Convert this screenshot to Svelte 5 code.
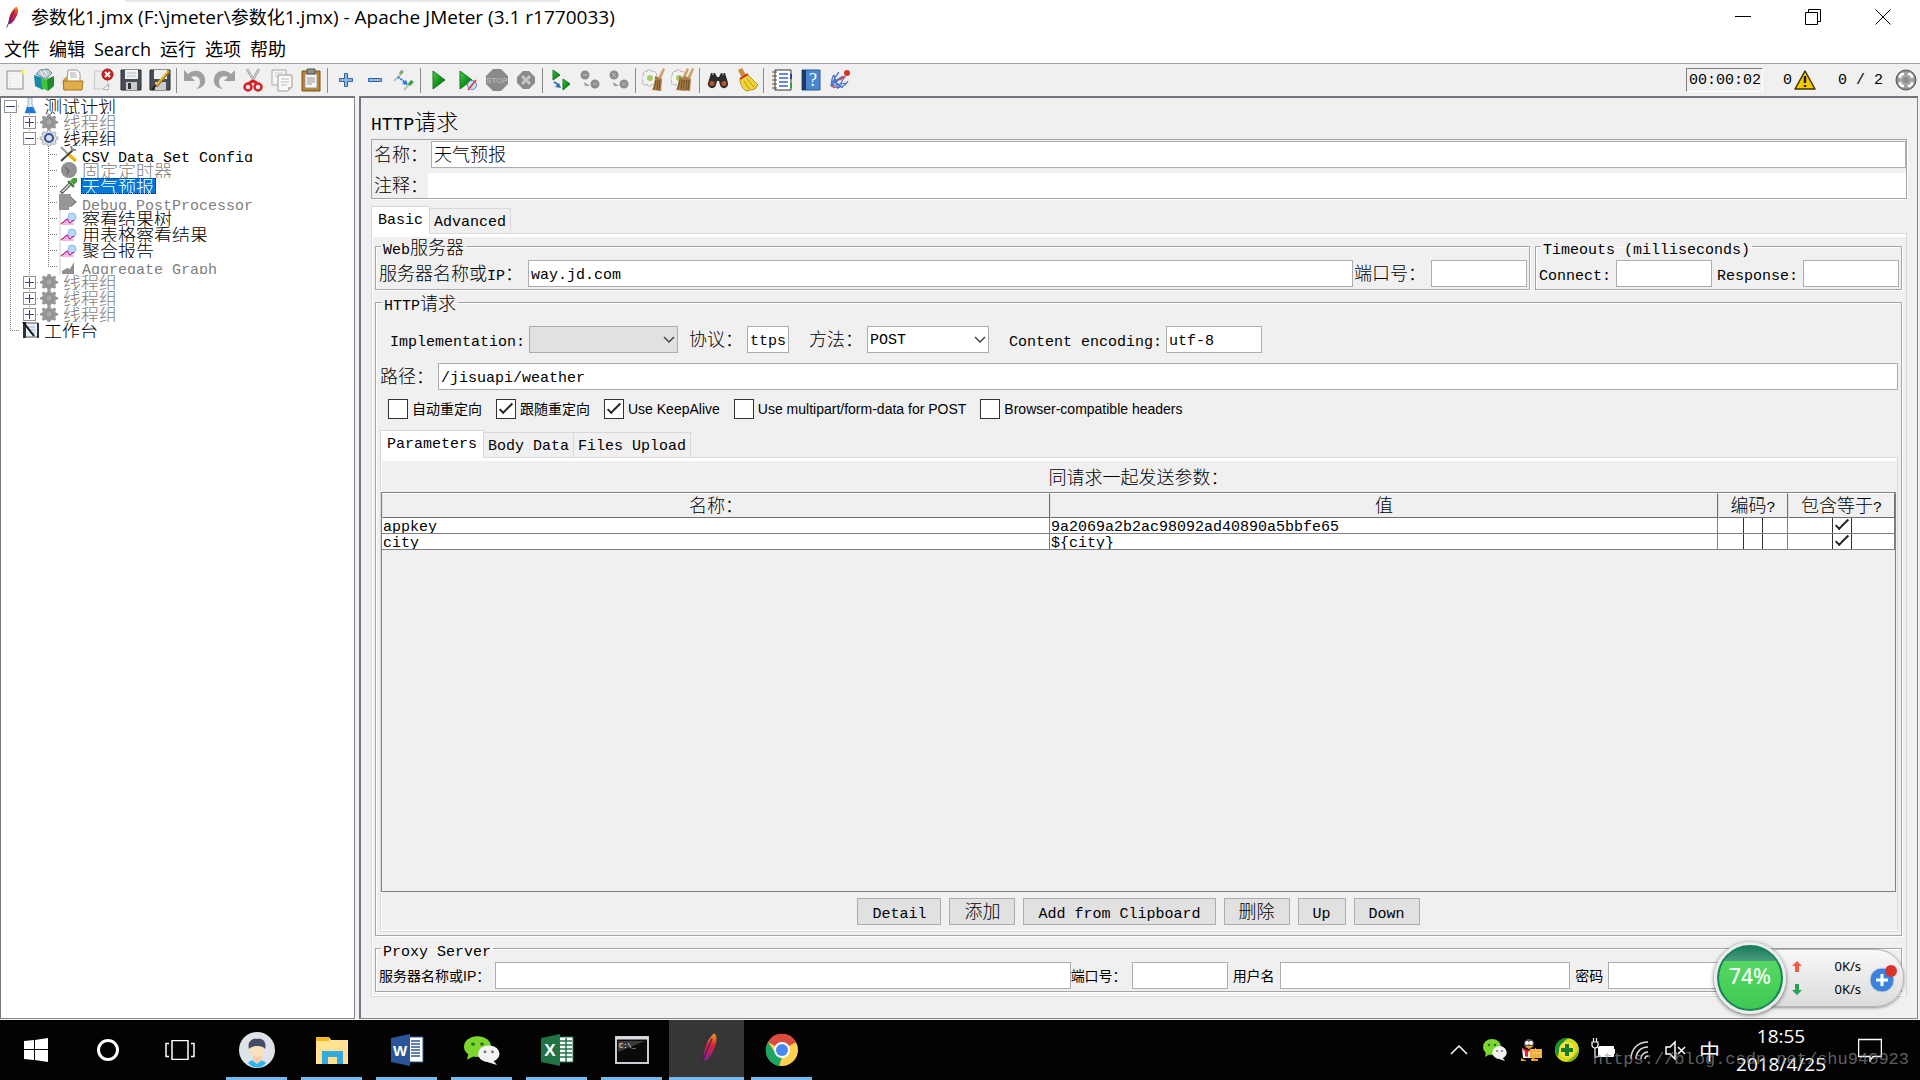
<script>
  const title = '参数化1.jmx (F:\\jmeter\\参数化1.jmx) - Apache JMeter (3.1 r1770033)'
  const menus = ['文件', '编辑', 'Search', '运行', '选项', '帮助']

  const toolbar = [
      ['new', 'templates', 'open', 'close', 'save', 'saveas'],
      ['undo', 'redo', 'cut', 'copy', 'paste'],
      ['plus', 'minus', 'toggle'],
      ['start', 'startnopause', 'stop', 'shutdown'],
      ['remotestart', 'remotestop', 'remoteshutdown'],
      ['clear', 'clearall'],
      ['search', 'searchreset'],
      ['functions', 'help', 'heap'],
  ]

  // guides: one entry per indent column, toggle: '+', '-' or none
  const tree = [
      { name: '测试计划', icon: 'plan', guides: ['first'], toggle: '-' },
      { name: '线程组', icon: 'gearoff', guides: ['line', 'tee'], toggle: '+', off: true },
      { name: '线程组', icon: 'gear', guides: ['line', 'tee'], toggle: '-' },
      { name: 'CSV Data Set Config', icon: 'config', guides: ['line', 'line', 'tee'] },
      { name: '固定定时器', icon: 'timer', guides: ['line', 'line', 'tee'], off: true },
      { name: '天气预报', icon: 'sampler', guides: ['line', 'line', 'tee'], selected: true },
      { name: 'Debug PostProcessor', icon: 'post', guides: ['line', 'line', 'tee'], off: true },
      { name: '察看结果树', icon: 'listener', guides: ['line', 'line', 'tee'] },
      { name: '用表格察看结果', icon: 'listener', guides: ['line', 'line', 'tee'] },
      { name: '聚合报告', icon: 'listener', guides: ['line', 'line', 'tee'] },
      { name: 'Aggregate Graph', icon: 'graphoff', guides: ['line', 'line', 'end'], off: true },
      { name: '线程组', icon: 'gearoff', guides: ['line', 'tee'], toggle: '+', off: true },
      { name: '线程组', icon: 'gearoff', guides: ['line', 'tee'], toggle: '+', off: true },
      { name: '线程组', icon: 'gearoff', guides: ['line', 'end'], toggle: '+', off: true },
      { name: '工作台', icon: 'workbench', guides: ['end'] },
  ]

  let options = $state([
      { label: '自动重定向', checked: false },
      { label: '跟随重定向', checked: true },
      { label: 'Use KeepAlive', checked: true },
      { label: 'Use multipart/form-data for POST', checked: false },
      { label: 'Browser-compatible headers', checked: false },
  ])

  let params = $state([
      { name: 'appkey', value: '9a2069a2b2ac98092ad40890a5bbfe65', encode: false, equals: true },
      { name: 'city', value: '${city}', encode: false, equals: true },
  ])

  const actions = ['Detail', '添加', 'Add from Clipboard', '删除', 'Up', 'Down']
  const apps = ['avatar', 'folder', 'word', 'wechat', 'excel', 'cmd', 'feather', 'chrome']

  let tab = $state('Basic')
  let bodyTab = $state('Parameters')
  let method = $state('POST')

  // split into latin and CJK runs, latin is set smaller so it takes half an em
  function runs(text) {
      return text.match(/[\x00-\x7f]+|[^\x00-\x7f]+/g) ?? []
  }

  const gear = 'M8.6 0h2.8l.5 2 1.7.7 2-1.1 1.6 1.7-1 1.9.7 1.5 2.1.6v2l-2.1.6-.7 1.4 1 1.9-1.6 1.6-2-1-1.7.7-.5 1.5H8.6l-.5-1.5-1.7-.7-2 1-1.6-1.6 1-1.9-.7-1.4L1 9.300V7.300l2.100-.6.7-1.500-1-1.900 1.600-1.700 2 1.100L8.100 2z'
  const broom = '<path d="M21 0l2 1-4 10-3-1z" fill="#c9a26a"/><path d="M13 8l7 3-1 12-9-1c2-4 3-8 3-14z" fill="#a97c48"/><path d="M14 12l-2 9M16 12l-1 10M18 12l-1 10" stroke="#6f4d27" stroke-width="1"/>'
  const miniGear = '<path d="M5 2h4l1 2 2-1 3 3-1 2 2 1v3l-2 1 1 2-3 2-2-1-1 2H6l-1-2-2 1-3-2 1-2-1-1V8l2-1-1-2 3-2 1 1z" fill="#f2f2f2" stroke="#bbb"/><circle cx="8" cy="10" r="3" fill="#a4cf62"/>'
  const feather = '<path d="M17 1c3 3 2 8-1 13-2 4-4 6-6 7l-2 0c0-8 3-16 9-20z" fill="url(#plume)"/><path d="M15 5C12 11 9 17 6 25" stroke="#4a1c55" stroke-width="1" fill="none"/>'
  const wechat = '<ellipse cx="9" cy="9" rx="9" ry="8" fill="#7bd62d"/><path d="M3 14l-1 5 5-3z" fill="#7bd62d"/><circle cx="6" cy="7" r="1.200" fill="#2f6a12"/><circle cx="12" cy="7" r="1.200" fill="#2f6a12"/><ellipse cx="16.500" cy="14.500" rx="7.200" ry="6.500" fill="#f2f2f2"/><path d="M19 19l3 4-6-2z" fill="#f2f2f2"/><circle cx="14" cy="13" r="1" fill="#777"/><circle cx="19" cy="13" r="1" fill="#777"/>'

  const icons = {
      new: '<path d="M4 3h16v18H4z" fill="#f4f4f4" stroke="#8c8c8c"/><path d="M7 6v13" stroke="#ccc" stroke-dasharray="1 2"/><path d="M20 0l1 3 3 1-3 1-1 3-1-3-3-1 3-1z" fill="#f7ea6a"/>',
      templates: '<path d="M4 6l4-4 8-1 4 4-6 6z" fill="#b9cdd2" stroke="#6b8a92"/><path d="M2 7l9 3v12l-8-4z" fill="#1689a8"/><path d="M9 10l7 2v11l-6-3z" fill="#3fc23c"/><path d="M15 11l7-3v10l-6 5z" fill="#1d8a2f"/><path d="M8 3l4 6M12 2l3 5" stroke="#fff"/>',
      open: '<path d="M7 2h9l3 3v9H6z" fill="#fff" stroke="#999"/><path d="M9 5h6M9 7h7M9 9h7" stroke="#aaa"/><path d="M2 12l3-3h1v4h14v9H2z" fill="#cf9632"/><path d="M2 13h20l-1 9H3z" fill="#e2ad4c" stroke="#a8741d"/>',
      close: '<path d="M5 3h12l1 18H4z" fill="#ececec" stroke="#c9c9c9"/><path d="M13 21l6-5-1 6z" fill="#fff" stroke="#aaa"/><circle cx="17.500" cy="6.500" r="5.500" fill="#d01f1f" stroke="#9c1010"/><path d="M15 4l5 5M20 4l-5 5" stroke="#fff" stroke-width="2"/>',
      save: '<path d="M2 2h20v20H2z" fill="#4a4e52" stroke="#2b2d30"/><path d="M6 2h13v9H6z" fill="#eef1f4"/><path d="M8 5h9M8 8h9" stroke="#b7c0c8"/><path d="M7 14h11v8H7z" fill="#c8ccd0"/><path d="M9 15h3v6H9z" fill="#333"/>',
      saveas: '<path d="M2 2h20v20H2z" fill="#4a4e52" stroke="#2b2d30"/><path d="M6 2h13v9H6z" fill="#eef1f4"/><path d="M7 14h11v8H7z" fill="#c8ccd0"/><path d="M21 3L8 18" stroke="#e8b13a" stroke-width="3"/><path d="M8 17l-4 5" stroke="#222" stroke-width="2"/><path d="M22 3L9 19" stroke="#7b5710"/>',
      undo: '<path d="M1 2v11h11l-4-4c6-2 9 1 9 5 0 3-1 5-4 7 7-1 10-5 9-10C21 3 12 0 5 6z" fill="#a0a0a0"/>',
      redo: '<path d="M23 2v11H12l4-4c-6-2-9 1-9 5 0 3 1 5 4 7-7-1-10-5-9-10C3 3 12 0 19 6z" fill="#a0a0a0"/>',
      cut: '<path d="M6 1l8 14M18 1l-8 14" stroke="#8f9498" stroke-width="2.500"/><path d="M6 1l8 14M18 1l-8 14" stroke="#dfe3e6"/><ellipse cx="7" cy="19" rx="3.500" ry="3.500" fill="none" stroke="#d81f26" stroke-width="2.500"/><ellipse cx="17" cy="19" rx="3.500" ry="3.500" fill="none" stroke="#d81f26" stroke-width="2.500"/><path d="M8 15l4-2 4 2" fill="none" stroke="#d81f26" stroke-width="3"/>',
      copy: '<path d="M2 2h14v15H2z" fill="#f4f4f4" stroke="#a8a8a8"/><path d="M5 5h8M5 8h8" stroke="#ccc"/><path d="M8 7h14v12l-4 4H8z" fill="#f8f8f8" stroke="#999"/><path d="M11 11h8M11 14h8M11 17h6" stroke="#bbb"/><path d="M18 23v-4h4z" fill="#bbb"/>',
      paste: '<path d="M3 3h18v20H3z" fill="#b9822d" stroke="#7b5313"/><path d="M6 6h12v14H6z" fill="#f6f6f6" stroke="#999"/><path d="M8 10h8M8 12h8M8 14h8M8 16h5" stroke="#999"/><path d="M8 1h8v5H8z" fill="#8b8f88" stroke="#555"/>',
      plus: '<path d="M10.500 5.500h3v5h5v3h-5v5h-3v-5h-5v-3h5z" fill="#8fb6e2" stroke="#2e64a8"/>',
      minus: '<path d="M5.500 10.500h13v3h-13z" fill="#8fb6e2" stroke="#2e64a8"/>',
      toggle: '<path d="M11 2l-3 5-6 6" stroke="#b5c8b5" stroke-width="2" fill="none"/><path d="M9 2l3 2-3 3-2-2z" fill="#81a878"/><path d="M6 9l8 6" stroke="#2876e0" stroke-width="2" stroke-dasharray="2 1"/><path d="M16 17l-6-1 4-4z" fill="#2876e0"/><path d="M20 13l-8 9" stroke="#b5c8b5" stroke-width="2"/><path d="M19 12l3 2-4 4-2-2z" fill="#3c9d3b"/>',
      start: '<path d="M6 3l12 9-12 9z" fill="url(#play)" stroke="#0b7a14"/>',
      startnopause: '<path d="M4 3l12 9-12 9z" fill="url(#play)" stroke="#0b7a14"/><circle cx="16" cy="17" r="4.500" fill="#cfe0f5" stroke="#5b86c6"/><path d="M12 22l8-10" stroke="#d33" stroke-width="1.500"/>',
      stop: '<path d="M8 1h8l7 7v8l-7 7H8l-7-7V8z" fill="#8a8a8a"/><text x="12" y="15" font-size="8" font-weight="bold" text-anchor="middle" font-family="Liberation Sans, sans-serif" fill="#b4b4b4">STOP</text>',
      shutdown: '<path d="M9 3h6l6 6v6l-6 6H9l-6-6V9z" fill="#8a8a8a"/><path d="M8 8l8 8M16 8l-8 8" stroke="#c4c4c4" stroke-width="3"/>',
      remotestart: '<path d="M4 2l7 5-7 5z" fill="url(#play)" stroke="#0b7a14"/><path d="M14 11l7 5-7 6z" fill="url(#play)" stroke="#0b7a14"/><path d="M5 14l5 3" stroke="#3b6fb5" stroke-width="2"/><path d="M12 20l-6-1 4-4z" fill="#3b6fb5"/>',
      remotestop: '<circle cx="7" cy="7" r="4.500" fill="#8d8d8d"/><circle cx="17" cy="16" r="4.500" fill="#8d8d8d"/><path d="M5 7h4M15 16h4" stroke="#a8a8a8" stroke-width="2"/><path d="M6 14l6 4H7z" fill="#999"/>',
      remoteshutdown: '<circle cx="7" cy="7" r="4.500" fill="#8d8d8d"/><circle cx="17" cy="16" r="4.500" fill="#8d8d8d"/><path d="M5 5l4 4M9 5L5 9M15 14l4 4M19 14l-4 4" stroke="#b4b4b4"/><path d="M6 14l6 4H7z" fill="#999"/>',
      clear: miniGear + broom,
      clearall: miniGear + '<g transform="translate(-5 0)">' + broom + '</g>' + broom,
      search: '<path d="M5 5h4l2 4h2l2-4h4l3 10a4 4 0 0 1-8 2l-1-4h-2l-1 4a4 4 0 0 1-8-2z" fill="#2c2c2c"/><circle cx="6" cy="15.500" r="2.500" fill="#b5562b"/><circle cx="18" cy="15.500" r="2.500" fill="#b5562b"/><path d="M6 6h2M16 6h2" stroke="#888" stroke-width="2"/>',
      searchreset: '<path d="M3 2l4-2 4 7-4 3z" fill="#c98e3a"/><path d="M5 11l7-5 11 11-3 4-9 2c-4-3-6-7-6-12z" fill="#f1d53b" stroke="#b7920f"/><path d="M5 11l8-5" stroke="#d22" stroke-width="2"/><path d="M9 13l5 8M12 11l7 8" stroke="#b7920f"/>',
      functions: '<path d="M5 2h16v20H5z" fill="#fff" stroke="#333"/><path d="M2 4h5M2 8h5M2 12h5M2 16h5M2 20h5" stroke="#555"/><path d="M9 6h9M9 10h9M9 14h9M9 18h9" stroke="#3566c9" stroke-width="1.500"/><path d="M21 6v5" stroke="#24a" stroke-width="2"/><path d="M21 15v5" stroke="#2a2" stroke-width="2"/>',
      help: '<path d="M3 2h18v20H3z" fill="#4a86d0" stroke="#2b5a9a"/><path d="M3 2h4v20H3z" fill="#1d3a66"/><text x="14" y="18" font-size="18" text-anchor="middle" font-family="Liberation Serif, serif" fill="#fff">?</text>',
      heap: '<path d="M20 13c-3 6-11 8-17 5 1-3 0-8 3-11M3 18l15-3M5 12l10 8M6 7l4 14M11 4c-5 6-6 10-8 14 6-5 9-8 15-9M16 10l-6 10M4 15l11-7" fill="none" stroke="#4b6fc4" stroke-width="1.200"/><path d="M12 12l5-4M7 20l-3-2" stroke="#d44" stroke-width="1.500"/><circle cx="19" cy="5" r="3" fill="#d9302c"/>',
  }

  const treeIcons = {
      plan: '<path d="M8 0h4v6l4 9H5l3-9z" fill="#dfe9f4" stroke="#9fb4c9"/><path d="M7 9h6l3 6H5z" fill="#1d7ad8"/>',
      gear: `<path d="${gear}" fill="#d9dde2" stroke="#aaa"/><circle cx="10" cy="8" r="4" fill="#cfe0f8" stroke="#34548f" stroke-width="2"/>`,
      gearoff: `<path d="${gear}" fill="#979797"/><circle cx="10" cy="8" r="3.500" fill="#a8a8a8" stroke="#858585"/>`,
      config: '<path d="M3 1l14 14" stroke="#9a9a9a" stroke-width="2"/><path d="M10 8l8 7" stroke="#f0b400" stroke-width="3"/><path d="M16 3L3 15" stroke="#444" stroke-width="2"/><path d="M13 0l1 4 4 0" fill="none" stroke="#888" stroke-width="2"/>',
      timer: '<circle cx="11" cy="8" r="8" fill="#929292"/><path d="M7 5l4 4-2 3" fill="none" stroke="#6e6e6e" stroke-width="1.500"/>',
      sampler: '<path d="M13 5L3 15" stroke="#555" stroke-width="3.500"/><path d="M13 5L4 14" stroke="#dce8dc" stroke-width="1.500"/><path d="M12 3l4 4 3-3V0h-4z" fill="#4b9c3e"/><path d="M10 3l6 6" stroke="#347a2a" stroke-width="2"/>',
      post: '<path d="M1 0h12v3l6 5-6 5H11v3H1z" fill="#979797"/><path d="M13 3l5 5-5 4" fill="none" stroke="#777"/>',
      listener: '<path d="M2 0v16" stroke="#ccc"/><path d="M4 14l5-5 3 4 4 0v2H3z" fill="#f6b8e8"/><circle cx="14" cy="7" r="4" fill="#b5dcfa" stroke="#8fb5e8"/><path d="M3 14l6-5 3 4 4-3" fill="none" stroke="#c0228c" stroke-width="1.200"/>',
      graphoff: '<path d="M2 0v16" stroke="#ccc"/><path d="M4 16v-3l5-3 3 1 4-7v12z" fill="#8f8f8f"/>',
      workbench: '<path d="M4 1h14v14H4z" fill="#eaf0f7" stroke="#555"/><path d="M3 0h3v16H3zM17 1h2v15h-2z" fill="#333"/><path d="M8 5h7M9 8h6M10 11h5" stroke="#9db8d6"/><path d="M3 0l11 14" stroke="#111" stroke-width="2"/>',
  }

  const appIcons = {
      avatar: '<circle cx="18" cy="18" r="18" fill="#dfe3e8"/><path d="M9 31c2-4 16-4 18 0-5 6-13 6-18 0z" fill="#2bb8f2"/><path d="M14 22h8v7l-4 3-4-3z" fill="#f6cfa8"/><circle cx="18" cy="18" r="7" fill="#fbe0c0"/><path d="M10 17c-2-7 3-11 8-10 6-1 10 3 8 10-2-3-6-3-8-3-3 0-6 1-8 3z" fill="#414e66"/>',
      folder: '<path d="M2 5h13l2 3h17v24H2z" fill="#ffe391"/><path d="M2 5h13v4H2z" fill="#f3b923"/><path d="M8 19h21v13h-6v-7h-9v7H8z" fill="#37a8e0"/>',
      word: '<path d="M20 5h14v25H20z" fill="#fff" stroke="#2a5699"/><path d="M22 9h9M22 12h9M22 15h9M22 18h9M22 21h9M22 24h9" stroke="#2a5699" stroke-width="1.500"/><path d="M2 6l19-4v32L2 30z" fill="#2a5699"/><text x="11" y="24" font-size="15" font-weight="bold" text-anchor="middle" font-family="Liberation Sans, sans-serif" fill="#fff">W</text>',
      wechat: '<g transform="translate(0 3) scale(1.500 1.300)">' + wechat + '</g>',
      excel: '<path d="M20 5h14v25H20z" fill="#fff" stroke="#217346"/><path d="M21 9h12M21 13h12M21 17h12M21 21h12M21 25h12M27 6v24" stroke="#217346" stroke-width="1.500"/><path d="M2 6l19-4v32L2 30z" fill="#217346"/><text x="11" y="24" font-size="17" font-weight="bold" text-anchor="middle" font-family="Liberation Sans, sans-serif" fill="#fff">X</text>',
      cmd: '<path d="M2 5h32v26H2z" fill="#0a0a0a" stroke="#c9ced4" stroke-width="2"/><path d="M2 6h32" stroke="#d9dde2" stroke-width="3"/><path d="M4 9h27L4 20z" fill="#3a3a3a"/><text x="5" y="16" font-size="7" font-family="Liberation Mono, monospace" fill="#fff">C:\\_</text>',
      feather: '<g transform="translate(5 0) scale(1.200 1.350)">' + feather + '</g>',
      chrome: '<circle cx="18" cy="18" r="16" fill="#fdd04e"/><path d="M18 18L4 10a16 16 0 0 1 28 0z" fill="#dd4b3e"/><path d="M18 2a16 16 0 0 1 14 9H18z" fill="#dd4b3e"/><path d="M4 10l8 12 6 3-3 9A16 16 0 0 1 4 10z" fill="#1da362"/><circle cx="18" cy="18" r="8" fill="#fff"/><circle cx="18" cy="18" r="6" fill="#4587f3"/>',
  }

  const trayIcons = {
      up: '<path d="M4 16l8-8 8 8" fill="none" stroke="#fff" stroke-width="1.500"/>',
      wechat,
      qq: '<ellipse cx="10" cy="6" rx="5" ry="5" fill="#555"/><ellipse cx="8" cy="5" rx="2" ry="2" fill="#fff"/><ellipse cx="12" cy="5" rx="2" ry="2" fill="#fff"/><path d="M6 8h8l-4 3z" fill="#f3a21b"/><path d="M3 10c4 3 10 3 14 0v10H4z" fill="#eee"/><path d="M2 9l6 3 7-1-6 3v5l-3-1v-4z" fill="#d9202a"/><path d="M2 20l6 3H2zM12 21h7v2h-7z" fill="#f3a21b"/><path d="M11 11h12v9h-7l-3 2v-2h-2z" fill="#efb03d"/><path d="M14 15h1M17 15h1M20 15h1" stroke="#fff"/>',
      safe: '<circle cx="12" cy="12" r="12" fill="#d3dc1c"/><path d="M0 12A12 12 0 0 1 14 0C8 3 4 8 3 19A12 12 0 0 1 0 12z" fill="#149332"/><path d="M22 18a12 12 0 0 0 2-8c-2 6-6 10-13 14 5 0 9-2 11-6z" fill="#7bb51c"/><circle cx="12" cy="12" r="8" fill="#f6e13a"/><path d="M10 6h4v4h4v4h-4v4h-4v-4H6v-4h4z" fill="#157a25"/>',
      battery: '<path d="M7 9h15v9H7z" fill="#fff"/><path d="M5 18.500h17.500v-10H8" fill="none" stroke="#fff"/><path d="M23.500 11v5" stroke="#fff"/><path d="M1 4h6v3a3 3 0 0 1-6 0zM2.500 0v4M5.500 0v4M4 10v9h3" fill="#000" stroke="#fff" stroke-width="1.200"/>',
      wifi: '<path d="M4 21C4 11 11 4 21 4M9 21c0-7 5-12 12-12M14 21c0-4 3-7 7-7M18 21c0-2 1-3 3-3" fill="none" stroke="#ddd" stroke-width="1.500"/>',
      mute: '<path d="M3 9h4l5-5v17l-5-5H3z" fill="none" stroke="#fff" stroke-width="1.500"/><path d="M15 9l7 7M22 9l-7 7" stroke="#fff" stroke-width="1.500"/>',
  }
</script>

{#snippet text(value)}<span class="mixed">{#each runs(value) as run}<span class={/[\x00-\x7f]/.test(run) ? 'latin' : 'cjk'}>{run}</span>{/each}</span>{/snippet}

{#snippet chevron()}
  <svg class="chevron" viewBox="0 0 12 8" width="12" height="8"><path d="M1 1l5 5 5-5" fill="none" stroke="#444" stroke-width="1.5" /></svg>
{/snippet}

<svg class="defs" width="0" height="0" aria-hidden="true">
  <defs>
    <linearGradient id="play" x1="0" y1="0" x2="1" y2="1">
      <stop offset="0" stop-color="#4fd04f" />
      <stop offset="0.5" stop-color="#14951c" />
      <stop offset="1" stop-color="#0a6a12" />
    </linearGradient>
    <linearGradient id="plume" x1="0" y1="0" x2="0" y2="1">
      <stop offset="0" stop-color="#f69923" />
      <stop offset="0.45" stop-color="#d8223a" />
      <stop offset="1" stop-color="#7c2a8c" />
    </linearGradient>
  </defs>
</svg>

<div class="screen">
  <header class="titlebar">
    <svg class="app-icon" viewBox="4 0 17 26" width="15" height="24">{@html feather}</svg>
    <h1>{@render text(title)}</h1>
    <div class="window-buttons">
      <button aria-label="Minimize"><svg viewBox="0 0 16 16" width="16" height="16"><path d="M0 7.5h16" stroke="#000" /></svg></button>
      <button aria-label="Restore"><svg viewBox="0 0 16 16" width="16" height="16"><path d="M.5 3.5h12v12H.5zM3.500 3.500v-3h12v12h-3" fill="none" stroke="#000" /></svg></button>
      <button aria-label="Close"><svg viewBox="0 0 16 16" width="16" height="16"><path d="M.5.5l15 15M15.500.5l-15 15" stroke="#000" /></svg></button>
    </div>
  </header>

  <nav class="menubar">
    {#each menus as menu}
      <button>{menu}</button>
    {/each}
  </nav>

  <div class="toolbar">
    {#each toolbar as group}
      <div class="group">
        {#each group as name}
          <button aria-label={name}><svg viewBox="0 0 24 24" width="24" height="24">{@html icons[name]}</svg></button>
        {/each}
      </div>
    {/each}
    <div class="status">
      <span class="timer">00:00:02</span>
      <span class="warnings">
        <span>0</span>
        <svg viewBox="0 0 22 20" width="22" height="20"><path d="M11 1l10 18H1z" fill="#f5c800" stroke="#3b3200" stroke-width="1.500" stroke-linejoin="round" /><path d="M11 6v7M11 15v2" stroke="#222" stroke-width="2.500" /></svg>
      </span>
      <span class="threads">0 / 2</span>
      <svg viewBox="0 0 22 22" width="22" height="22"><circle cx="11" cy="11" r="10" fill="#8d8d8d" stroke="#555" /><circle cx="11" cy="11" r="8" fill="#a5a5a5" /><path d="M5 9V7l2-2h2M13 5h2l2 2v2M17 13v2l-2 2h-2M9 17H7l-2-2v-2" fill="none" stroke="#fff" stroke-width="2.500" /><circle cx="11" cy="11" r="3" fill="#8d8d8d" /></svg>
    </div>
  </div>

  <main class="split">
    <aside class="tree">
      <ul>
        {#each tree as node}
          <li class:off={node.off}>
            {#each node.guides as guide, i}
              <span class="guide {guide}">
                {#if node.toggle && i === node.guides.length - 1}
                  <button class="toggle" aria-label="Toggle {node.name}">
                    <svg viewBox="0 0 11 11" width="11" height="11"><path d={node.toggle === '+' ? 'M1 5.5h9M5.5 1v9' : 'M1 5.5h9'} stroke="#27408b" /></svg>
                  </button>
                {/if}
              </span>
            {/each}
            <svg class="node-icon" viewBox="0 0 20 16" width="20" height="16">{@html treeIcons[node.icon]}</svg>
            <span class="node-name" class:selected={node.selected}>{@render text(node.name)}</span>
          </li>
        {/each}
      </ul>
    </aside>

    <section class="editor">
      <h2><span>HTTP</span>请求</h2>

      <div class="identity">
        <div class="identity-row">
          <label for="name">名称：</label>
          <input id="name" class="wide zh" value="天气预报" />
        </div>
        <div class="identity-row comment">
          <label for="comment">注释：</label>
          <input id="comment" class="wide" />
        </div>
      </div>

      <div class="tabs">
        {#each ['Basic', 'Advanced'] as name}
          <button class:active={tab === name} onclick={() => (tab = name)}>{name}</button>
        {/each}
      </div>
      <div class="tab-body outer">
        <div class="servers">
          <fieldset class="web">
            <legend>{@render text('Web服务器')}</legend>
            <label for="server">{@render text('服务器名称或IP：')}</label>
            <input id="server" class="wide" value="way.jd.com" />
            <label for="port">端口号：</label>
            <input id="port" class="short" />
          </fieldset>
          <fieldset class="timeouts">
            <legend>{@render text('Timeouts (milliseconds)')}</legend>
            <label for="connect">{@render text('Connect:')}</label>
            <input id="connect" class="short" />
            <label class="next" for="response">{@render text('Response:')}</label>
            <input id="response" class="short" />
          </fieldset>
        </div>

        <fieldset class="request">
          <legend>{@render text('HTTP请求')}</legend>
          <div class="line settings">
            <div class="pair">
              <label for="impl">{@render text('Implementation:')}</label>
              <span class="combo impl">
                <select id="impl"><option></option></select>
                {@render chevron()}
              </span>
            </div>
            <div class="pair protocol">
              <label for="protocol">协议：</label>
              <input id="protocol" class="tiny" value="ttps" />
            </div>
            <div class="pair">
              <label for="method">方法：</label>
              <span class="combo method">
                <select id="method" bind:value={method}>
                  <option>POST</option>
                  <option>GET</option>
                </select>
                {@render chevron()}
              </span>
            </div>
            <div class="pair">
              <label for="encoding">{@render text('Content encoding:')}</label>
              <input id="encoding" class="short" value="utf-8" />
            </div>
          </div>

          <div class="line path">
            <label for="path">路径：</label>
            <input id="path" class="wide" value="/jisuapi/weather" />
          </div>

          <div class="line checks">
            {#each options as option}
              <label><input type="checkbox" bind:checked={option.checked} />{option.label}</label>
            {/each}
          </div>

          <div class="tabs">
            {#each ['Parameters', 'Body Data', 'Files Upload'] as name}
              <button class:active={bodyTab === name} onclick={() => (bodyTab = name)}>{name}</button>
            {/each}
          </div>
          <div class="tab-body inner">
            <p class="caption">同请求一起发送参数：</p>
            <div class="grid-scroll">
              <table>
                <colgroup><col /><col /><col class="c-encode" /><col class="c-equals" /></colgroup>
                <thead>
                  <tr>
                    {#each ['名称：', '值', '编码?', '包含等于?'] as column}
                      <th>{@render text(column)}</th>
                    {/each}
                  </tr>
                </thead>
                <tbody>
                  {#each params as param}
                    <tr>
                      <td><div>{param.name}</div></td>
                      <td><div>{param.value}</div></td>
                      <td><div class="tick"><input type="checkbox" aria-label="编码" bind:checked={param.encode} /></div></td>
                      <td><div class="tick"><input type="checkbox" aria-label="包含等于" bind:checked={param.equals} /></div></td>
                    </tr>
                  {/each}
                </tbody>
              </table>
            </div>
            <div class="actions">
              {#each actions as action}
                <button>{@render text(action)}</button>
              {/each}
            </div>
          </div>
        </fieldset>

        <fieldset class="proxy">
          <legend>{@render text('Proxy Server')}</legend>
          <label for="proxy-server">服务器名称或IP：</label>
          <input id="proxy-server" class="server" />
          <label class="port" for="proxy-port">端口号：</label>
          <input id="proxy-port" class="short" />
          <label class="next" for="proxy-user">用户名</label>
          <input id="proxy-user" class="credential" />
          <label class="next" for="proxy-pass">密码</label>
          <input id="proxy-pass" class="credential" type="password" />
        </fieldset>
      </div>
    </section>
  </main>

  <footer class="taskbar">
    <button class="system" aria-label="Start">
      <svg viewBox="0 0 24 24" width="24" height="24"><path d="M0 3l10-1v9H0zM11 2l13-2v11H11zM0 12h10v10L0 21zM11 12h13v12l-13-2z" fill="#fff" /></svg>
    </button>
    <button class="system" aria-label="Search">
      <svg viewBox="0 0 24 24" width="24" height="24"><circle cx="12" cy="12" r="9.500" fill="none" stroke="#fff" stroke-width="3" /></svg>
    </button>
    <button class="system" aria-label="Task view">
      <svg viewBox="0 0 30 20" width="30" height="20"><path d="M7 .5h16v19H7zM4 3.500H1v13h3M26 3.500h3v13h-3" fill="none" stroke="#fff" stroke-width="1.500" /></svg>
    </button>
    <div class="apps">
      {#each apps as app}
        <button class="app" class:current={app === 'feather'} aria-label={app}>
          <svg viewBox="0 0 36 36" width="36" height="36">{@html appIcons[app]}</svg>
        </button>
      {/each}
    </div>

    <div class="tray">
      {#each Object.keys(trayIcons) as name}
        <svg viewBox="0 0 24 24" width="24" height="24">{@html trayIcons[name]}</svg>
      {/each}
      <span class="ime">中</span>
      <div class="clock"><span>18:55</span><span>2018/4/25</span></div>
      <svg class="notify" viewBox="0 0 24 24" width="24" height="24"><path d="M.5 1.500h23v17H15l-3 4v-4H.5z" fill="none" stroke="#fff" stroke-width="1.500" /></svg>
    </div>
    <span class="watermark">https://blog.csdn.net/shu940923</span>
  </footer>

  <div class="top-shade"></div>

  <div class="monitor">
    <div class="ball"><span>74%</span></div>
    <div class="rates">
      <div>
        <svg viewBox="0 0 10 12" width="10" height="12"><path d="M5 0l5 5H7v6H3V5H0z" fill="#ee5a42" /></svg>
        <span>0K/s</span>
      </div>
      <div>
        <svg viewBox="0 0 10 12" width="10" height="12"><path d="M5 11L0 6h3V0h4v6h3z" fill="#23a455" /></svg>
        <span>0K/s</span>
      </div>
    </div>
    <svg class="boost" viewBox="0 0 30 30" width="30" height="30"><circle cx="14" cy="17" r="12" fill="#3b82dc" stroke="#c6cfda" /><path d="M14 11v12M8 17h12" stroke="#fff" stroke-width="3" /><circle cx="23" cy="8" r="6" fill="#d8322e" /></svg>
  </div>
</div>

<style>
  :global(body) {
    background: #000;
  }

  .screen {
    --latin: 'Liberation Mono', 'Noto Sans CJK SC', monospace;
    --cjk: 'Noto Sans CJK SC', sans-serif;
    --ui: 'Open Sans', 'Noto Sans CJK SC', sans-serif;
    --face: #f0f0f0;
    --line: #a6a6a9;
    display: flex;
    flex-direction: column;
    position: relative;
    min-height: 100vh;
    background: var(--face);
    color: #000;
    font: 300 18px/18px var(--cjk);
    white-space: nowrap;
  }

  .screen :global(svg) {
    display: block;
    flex: none;
  }

  .defs {
    position: absolute;
  }

  button {
    padding: 0;
    border: 0;
    background: none;
    color: inherit;
    font: inherit;
  }

  .mixed {
    white-space: pre;
  }

  /* zero line height keeps the smaller face from growing the line box */
  .latin {
    font: 400 15px/0 var(--latin);
  }

  /* title, menu */
  .titlebar {
    display: flex;
    align-items: center;
    height: 34px;
    padding: 0 2px 0 5px;
    background: #fff;
  }

  h1 {
    margin: 0 0 0 11px;
    font: 400 18px/24px var(--ui);
  }

  h1 .latin {
    font: 400 19px/0 var(--ui);
  }

  .window-buttons {
    display: flex;
    margin-left: auto;
  }

  .window-buttons button {
    display: flex;
    justify-content: center;
    width: 70px;
  }

  .menubar {
    display: flex;
    gap: 9px;
    height: 29px;
    padding-left: 4px;
    background: #fff;
    border-bottom: 1px solid #a0a0a0;
    font: 400 18px/28px var(--ui);
  }

  /* toolbar */
  .toolbar {
    display: flex;
    align-items: center;
    height: 32px;
  }

  .group {
    display: flex;
  }

  .group + .group {
    margin-left: 2px;
    padding-left: 3px;
    border-left: 1px solid #8a8a8a;
  }

  .group button {
    display: flex;
    justify-content: center;
    align-items: center;
    width: 29px;
    height: 25px;
  }

  .status {
    display: flex;
    align-items: center;
    margin-left: auto;
    padding-right: 3px;
    font: 15px/20px var(--latin);
  }

  .timer {
    padding: 2px 1px 0 2px;
    border: 1px solid;
    border-color: #808080 #fff #fff #808080;
  }

  .warnings {
    display: flex;
    align-items: center;
    gap: 2px;
    margin-left: 20px;
  }

  .warnings span,
  .threads {
    padding-top: 2px;
  }

  .threads {
    margin: 0 12px 0 22px;
  }

  /* split panes */
  .split {
    display: flex;
    flex: 1;
    gap: 4px;
  }

  .tree {
    width: 353px;
    background: #fff;
    border: 1px solid #828790;
    border-top: 2px solid #73777d;
    border-left: 1px solid #73777d;
    margin-bottom: 1px;
  }

  ul {
    margin: 0;
    padding: 0;
    list-style: none;
  }

  li {
    display: flex;
    height: 16px;
    overflow: hidden;
    line-height: 16px;
  }

  .off {
    color: #808080;
  }

  .guide {
    --v: repeating-linear-gradient(#808080 0 1px, transparent 1px 2px);
    --h: repeating-linear-gradient(90deg, #808080 0 1px, transparent 1px 2px);
    display: flex;
    justify-content: center;
    align-items: center;
    width: 19px;
    background: var(--v) 9px 0 / 1px 100% no-repeat;
  }

  .guide.first {
    background: var(--v) 9px 8px / 1px 8px no-repeat, var(--h) 9px 8px / 10px 1px no-repeat;
  }

  .guide.tee {
    background: var(--v) 9px 0 / 1px 100% no-repeat, var(--h) 9px 8px / 10px 1px no-repeat;
  }

  .guide.end {
    background: var(--v) 9px 0 / 1px 8px no-repeat, var(--h) 9px 8px / 10px 1px no-repeat;
  }

  .toggle {
    width: 13px;
    height: 13px;
    border: 1px solid #919191;
    background: #fff;
  }

  .node-name {
    margin-left: 3px;
    padding: 0 2px 0 1px;
  }

  .node-name.selected {
    background: #0078d7;
    color: #fff;
    outline: 1px dotted #222;
    outline-offset: -1px;
  }

  .editor {
    display: flex;
    flex: 1;
    flex-direction: column;
    margin: 0 2px 1px 0;
    padding: 0 10px 21px;
    border: 1px solid #828790;
    border-top: 2px solid #73777d;
    border-left: 2px solid #73777d;
  }

  h2 {
    margin: 10px 0 7px;
    font: 300 22px/24px var(--cjk);
  }

  h2 span {
    font: 400 18px/0 var(--latin);
  }

  .identity {
    border: 1px solid var(--line);
    box-shadow: 1px 1px #fff;
    padding: 1px 0 0 2px;
  }

  .identity-row {
    display: flex;
    align-items: center;
  }

  .identity-row label {
    margin-right: 3px;
    padding-bottom: 3px;
  }

  .identity-row.comment {
    margin-top: 5px;
  }

  .comment label {
    margin-right: 0;
  }

  input,
  select {
    box-sizing: border-box;
    min-width: 0;
    height: 27px;
    margin: 0;
    padding: 3px 2px 0;
    border: 1px solid #abadb3;
    border-radius: 0;
    outline: 0;
    background: #fff;
    color: #000;
    font: 15px/18px var(--latin);
  }

  .comment input {
    height: 25px;
    border: 0;
  }

  .zh {
    padding: 0 2px 3px;
    font: 300 18px/22px var(--cjk);
  }

  .wide {
    flex: 1;
  }

  .short {
    width: 96px;
  }

  .tiny {
    width: 42px;
  }

  /* tabs */
  .tabs {
    display: flex;
    align-items: flex-end;
    margin-top: 7px;
  }

  .tabs button {
    position: relative;
    height: 25px;
    padding: 0 4px;
    border: 1px solid #d9d9d9;
    border-width: 1px 1px 0 0;
    font: 15px/28px var(--latin);
  }

  .tabs .active {
    height: 28px;
    margin-bottom: -1px;
    padding: 0 6px;
    border-width: 1px 1px 0 1px;
    background: #fff;
    z-index: 1;
  }

  .tab-body {
    display: flex;
    flex: 1;
    flex-direction: column;
    border: 1px solid #d9d9d9;
    box-shadow: inset 0 3px #fff, inset 1px -1px #fff;
  }

  .outer {
    gap: 3px;
    padding: 3px 4px 4px 3px;
  }

  fieldset {
    display: flex;
    align-items: center;
    min-width: 0;
    margin: 0;
    padding: 5px 2px 2px 3px;
    border: 1px solid var(--line);
    box-shadow: 1px 1px #fff, inset 1px 1px #fff;
  }

  legend {
    height: 18px;
    margin-left: 2px;
    padding: 0 2px;
  }

  fieldset label {
    margin-right: 5px;
    padding-bottom: 3px;
  }

  .servers {
    display: flex;
    gap: 5px;
  }

  .web {
    flex: 1;
  }

  .web .wide + label {
    margin-left: 1px;
  }

  .next {
    margin-left: 5px;
  }

  .request {
    flex: 1;
    flex-direction: column;
    align-items: stretch;
    padding: 15px 3px 3px 4px;
  }

  .line {
    display: flex;
    align-items: center;
  }

  .settings {
    gap: 20px;
    padding-left: 10px;
  }

  .pair {
    display: flex;
    align-items: center;
  }

  .pair label {
    margin-right: 4px;
  }

  .protocol {
    margin-left: -9px;
  }

  .combo {
    display: grid;
    align-items: center;
  }

  .combo select,
  .combo .chevron {
    grid-area: 1 / 1;
  }

  .combo select {
    width: 100%;
    appearance: none;
  }

  .chevron {
    justify-self: end;
    margin-right: 3px;
    pointer-events: none;
  }

  .impl {
    width: 149px;
  }

  .impl select {
    background: #e1e1e1;
  }

  .method {
    width: 122px;
  }

  .path {
    margin-top: 10px;
  }

  .path label {
    margin-right: 4px;
  }

  .checks {
    gap: 14px;
    margin: 9px 0 4px;
    padding-left: 8px;
  }

  .checks label {
    display: flex;
    align-items: center;
    gap: 4px;
    margin: 0;
    padding: 0;
    font: 400 14px/20px 'Liberation Sans', 'Noto Sans CJK SC', sans-serif;
  }

  input[type='checkbox'] {
    appearance: none;
    display: grid;
    place-items: center;
    flex: none;
    width: 20px;
    height: 20px;
    padding: 0;
    border: 1px solid #333;
  }

  input[type='checkbox']:checked::before {
    content: '';
    width: 14px;
    height: 6px;
    margin-top: -5px;
    border: solid #222;
    border-width: 0 0 2px 2px;
    box-sizing: border-box;
    transform: rotate(-45deg);
  }

  .inner {
    padding: 3px 1px 6px 0;
  }

  .caption {
    margin: 6px 0 7px;
    text-align: center;
  }

  .grid-scroll {
    flex: 1;
    border: 1px solid #7d7f8c;
  }

  table {
    width: 100%;
    table-layout: fixed;
    border-spacing: 0;
    background: #fff;
  }

  .c-encode {
    width: 70px;
  }

  .c-equals {
    width: 107px;
  }

  th {
    height: 18px;
    padding: 1px 0 4px;
    background: var(--face);
    border: 1px solid;
    border-color: #fff #6e6e76 #6e6e76 #e0e0e0;
    font-weight: 300;
  }

  td {
    padding: 0;
    border-right: 1px solid #808080;
    border-bottom: 1px solid #808080;
    font: 15px/20px var(--latin);
  }

  td div {
    height: 15px;
    padding-left: 1px;
    overflow: hidden;
  }

  .tick {
    display: flex;
    justify-content: center;
    align-items: center;
  }

  .actions {
    display: flex;
    justify-content: center;
    gap: 8px;
    margin-top: 6px;
  }

  .actions button {
    height: 27px;
    padding: 0 14px 3px;
    border: 1px solid #adadad;
    background: #e1e1e1;
  }

  .proxy label {
    padding: 0;
    font: 400 14px/18px 'Liberation Sans', 'Noto Sans CJK SC', sans-serif;
  }

  .server {
    flex: 2;
  }

  .credential {
    flex: 1;
  }

  /* taskbar */
  .taskbar {
    display: flex;
    position: relative;
    height: 60px;
    background: #030304;
    color: #fff;
    font-family: var(--ui);
  }

  .system {
    display: flex;
    justify-content: center;
    align-items: center;
    width: 72px;
  }

  .apps {
    display: flex;
    margin-left: 3px;
  }

  .app {
    display: flex;
    justify-content: center;
    align-items: center;
    width: 75px;
    background: linear-gradient(#76b9ed, #76b9ed) 50% 100% / 61px 3px no-repeat;
  }

  .current {
    background: linear-gradient(#76b9ed, #76b9ed) 50% 100% / 100% 3px no-repeat #363637;
  }

  .tray {
    display: flex;
    align-items: center;
    gap: 12px;
    margin-left: auto;
    padding-right: 38px;
  }

  .ime {
    font: 400 21px/24px var(--cjk);
  }

  .clock {
    display: flex;
    flex-direction: column;
    align-items: center;
    margin: 0 20px 0 4px;
    font: 400 19px/28px var(--ui);
  }

  .watermark {
    position: absolute;
    right: 11px;
    bottom: 8px;
    color: rgba(150, 150, 150, 0.65);
    font: 17px/24px var(--latin);
  }

  .top-shade {
    position: absolute;
    top: 0;
    left: 125px;
    width: 435px;
    height: 3px;
    background: linear-gradient(#dcdcdc, #fff);
  }

  /* network monitor floating over the desktop */
  .monitor {
    display: flex;
    position: absolute;
    right: 16px;
    bottom: 66px;
    align-items: center;
    width: 190px;
    height: 72px;
    font: 400 13px/23px 'Noto Sans', sans-serif;
  }

  .monitor::before {
    content: '';
    position: absolute;
    inset: 7px 0 7px 36px;
    border: 1px solid #b5b5b5;
    border-radius: 28px;
    background: linear-gradient(#f8f8f8, #dcdcdc);
    box-shadow: 0 1px 3px rgba(0, 0, 0, 0.4);
  }

  .ball {
    position: relative;
    display: grid;
    place-items: center;
    box-sizing: border-box;
    width: 72px;
    height: 72px;
    padding-bottom: 3px;
    border: 3px solid #ececec;
    border-radius: 50%;
    background: linear-gradient(#17775a 0, #4a9c7c 16px, #55d863 16px, #3ec852);
    box-shadow: 0 1px 4px rgba(0, 0, 0, 0.6), inset 0 0 0 2px #16835a;
    color: #f4fff4;
    font-size: 21px;
    font-weight: 500;
  }

  .rates {
    position: relative;
    flex: 1;
    margin-left: 6px;
  }

  .rates div {
    display: flex;
    justify-content: space-between;
    align-items: center;
  }

  .boost {
    position: relative;
    margin: 0 6px 0 7px;
  }
</style>
